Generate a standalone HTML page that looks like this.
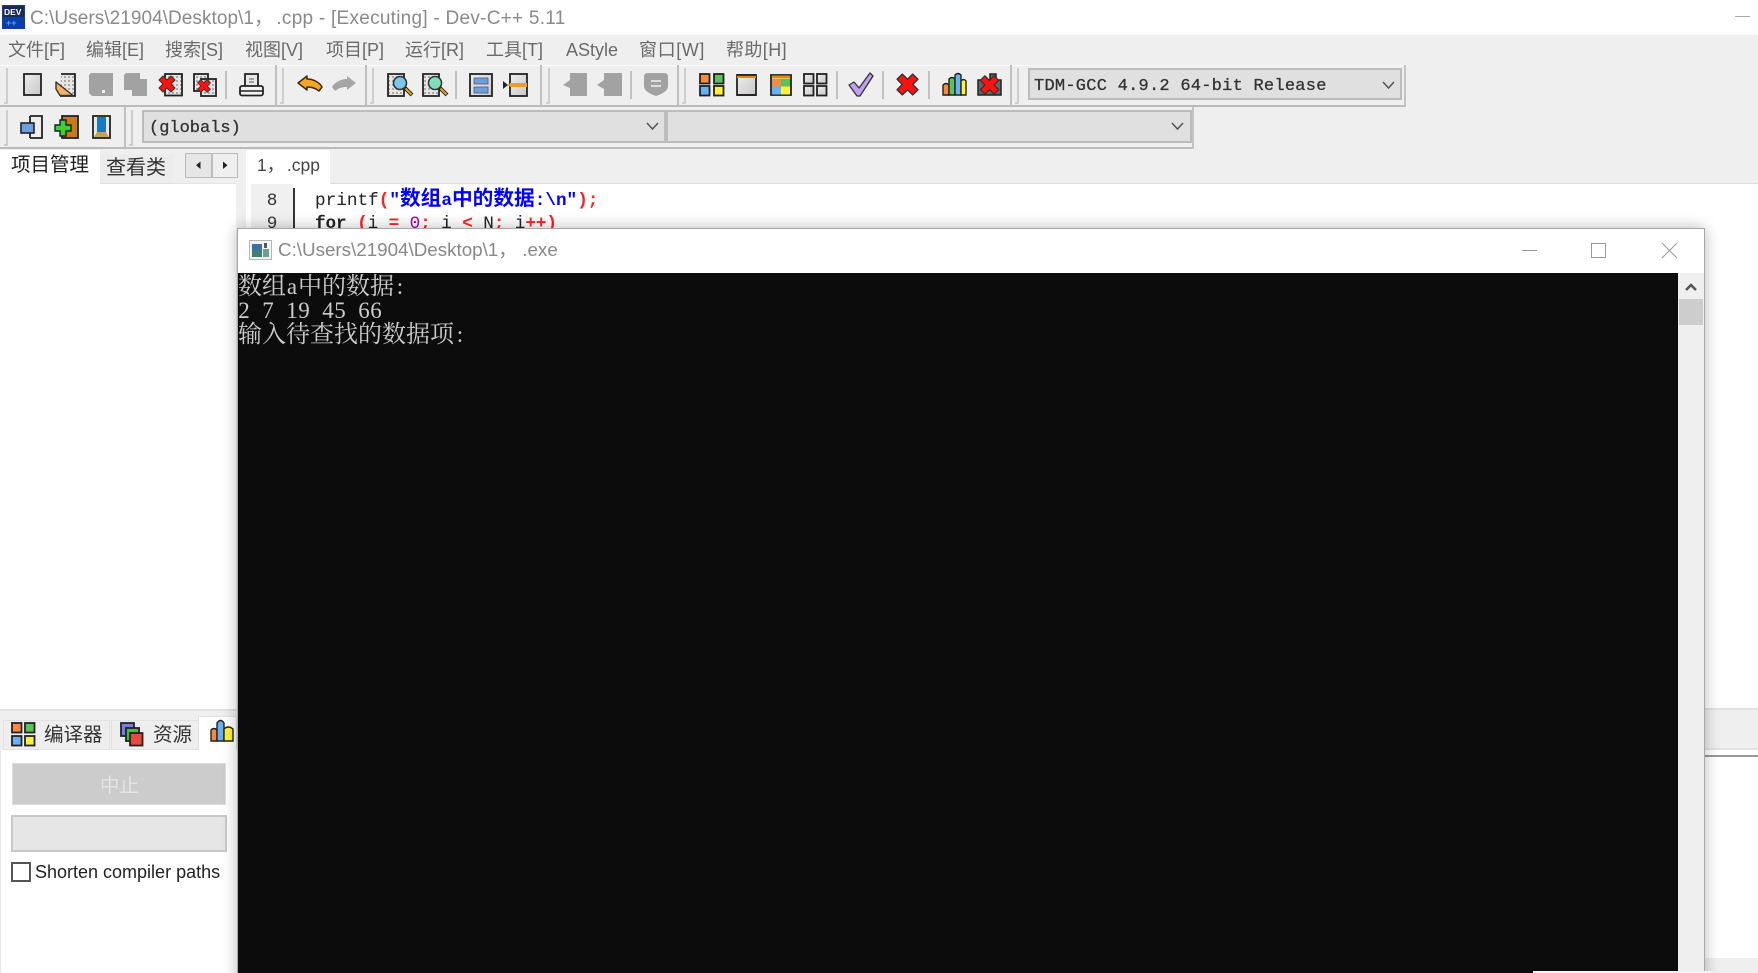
<!DOCTYPE html>
<html lang="zh"><head><meta charset="utf-8"><title>Dev-C++</title>
<style>
html,body{margin:0;padding:0;width:1758px;height:973px;overflow:hidden;background:#fff}
body{position:relative;font-family:"Liberation Sans","Noto Sans CJK SC",sans-serif}
.a{position:absolute}
.t{position:absolute;white-space:nowrap;line-height:1;filter:blur(.3px)}
.m{font-size:18px;color:#6a6a6a;top:41px}
.mono{font-family:"Liberation Mono",monospace;color:#333;font-size:17px;font-weight:normal;-webkit-text-stroke:.3px #333}
.code{font-family:"Liberation Mono","Noto Sans CJK SC",monospace;font-size:17.7px;color:#222}
.r{color:#f22;font-weight:bold}.b{color:#00f;font-weight:bold}
.b u{text-decoration:none;font-size:20.7px;line-height:1}
.con{font-family:"Liberation Serif","Noto Serif CJK SC",serif;color:#ccc;font-size:24px;left:238px;height:24px;line-height:24px}
.con i{display:inline-block;width:12px;font-style:normal;text-align:center;font-size:23px}
</style></head><body>
<!-- main backgrounds -->
<div class="a" style="left:0;top:35px;width:1758px;height:148px;background:#efefef"></div>
<div class="a" style="left:0;top:183px;width:236px;height:526px;background:#fff"></div>
<div class="a" style="left:236px;top:183px;width:10px;height:790px;background:#efefef"></div>
<div class="a" style="left:0;top:183px;width:236px;height:1px;background:#e4e4e4"></div>
<div class="a" style="left:0;top:709px;width:237px;height:41px;background:#efefef;border-top:2px solid #e2e2e2;box-sizing:border-box"></div>
<div class="a" style="left:0;top:750px;width:237px;height:223px;background:#fff;border-left:1px solid #e6e6e6;box-sizing:border-box"></div>
<div class="a" style="left:246px;top:183px;width:1512px;height:1px;background:#ddd"></div>
<div class="a" style="left:251px;top:184px;width:42px;height:50px;background:#f0f0f0"></div>
<div class="a" style="left:293px;top:188px;width:2px;height:46px;background:#333"></div>
<!-- right-hand panels -->
<div class="a" style="left:1704px;top:708px;width:54px;height:42px;background:#efefef;border-top:2px solid #e2e2e2;border-bottom:2px solid #e2e2e2;box-sizing:border-box"></div>
<div class="a" style="left:1704px;top:755px;width:54px;height:2px;background:#999"></div>
<div class="a" style="left:1704px;top:958px;width:54px;height:15px;background:#efefef"></div>
<!-- toolbar frames -->
<div class="a" style="left:0;top:65px;width:1405px;height:1px;background:#fafafa"></div>
<div class="a" style="left:0;top:105px;width:1405px;height:2px;background:#bbb"></div>
<div class="a" style="left:0;top:147px;width:1193px;height:2px;background:#bbb"></div>
<div class="a" style="left:1404px;top:65px;width:2px;height:42px;background:#c4c4c4"></div>
<div class="a" style="left:1192px;top:107px;width:2px;height:42px;background:#c4c4c4"></div>
<!-- combos -->
<div class="a" style="left:1028px;top:68px;width:374px;height:32px;background:#e0e0e0;border:2px solid #bcbcbc;box-sizing:border-box"></div>
<div class="a" style="left:142px;top:110px;width:524px;height:33px;background:#e0e0e0;border:2px solid #bcbcbc;box-sizing:border-box"></div>
<div class="a" style="left:666px;top:110px;width:526px;height:33px;background:#e0e0e0;border:2px solid #bcbcbc;box-sizing:border-box"></div>
<!-- tabs -->
<div class="a" style="left:0;top:150px;width:100px;height:34px;background:#fff"></div>
<div class="a" style="left:100px;top:154px;width:74px;height:30px;background:#ececec;border-bottom:1px solid #e0e0e0;box-sizing:border-box"></div>
<div class="a" style="left:246px;top:150px;width:84px;height:34px;background:#fff"></div>
<div class="a" style="left:185px;top:153px;width:27px;height:25px;background:#e6e6e6;border:1px solid #bbb;box-sizing:border-box"></div>
<div class="a" style="left:212px;top:153px;width:26px;height:25px;background:#efefef;border:1px solid #bbb;box-sizing:border-box"></div>

<!-- SVG icons -->
<svg class="a" style="left:0;top:0;filter:blur(.35px)" width="1758" height="973" viewBox="0 0 1758 973">
<defs>
<pattern id="dots" width="4" height="4" patternUnits="userSpaceOnUse"><rect width="4" height="4" fill="#e6e6e6"/><rect x="0" y="0" width="2" height="2" fill="#aaa"/></pattern>
<linearGradient id="gr" x1="0" y1="0" x2="1" y2="1"><stop offset="0" stop-color="#eee"/><stop offset="1" stop-color="#c8c8c8"/></linearGradient>
<g id="redx"><path d="M-8 -4 L-4 -8 L0 -4 L4 -8 L8 -4 L4 0 L8 4 L4 8 L0 4 L-4 8 L-8 4 L-4 0Z" fill="#f11" stroke="#333" stroke-width="1.100" stroke-linejoin="round"/></g>
<g id="glass"><circle cx="0" cy="0" r="6.5" fill="#7cc8e8" stroke="#333" stroke-width="1.6"/><path d="M5 5 L12 12" stroke="#222" stroke-width="4"/><path d="M5.500 5.500 L11.500 11.500" stroke="#e8a020" stroke-width="2"/></g>
</defs>
<!-- app icon -->
<rect x="2" y="5" width="23" height="24" fill="#0c3ea8"/><rect x="3" y="6" width="21" height="11" fill="#1a2a58"/>
<text x="4" y="15" font-family="Liberation Sans" font-size="8.500" font-weight="bold" fill="#fff">DEV</text>
<text x="6" y="26" font-family="Liberation Sans" font-size="9" font-weight="bold" fill="#4da0ff">++</text>
<!-- grips and separators, row 1 -->
<g stroke="#c4c4c4" stroke-width="1.500" fill="none">
<path d="M7 68V103H4M283 68V103H280M373 68V103H370M549 68V103H546M685 68V103H682M1018 68V103H1015M7 110V145H4M132 110V145H129"/>
<path d="M276 65V106M366 65V106M541 65V106M678 65V106M1011 65V106M125 107V148" stroke="#c0c0c0" stroke-width="2"/>
<path d="M226 71V99M456 71V99M631 71V99M837 71V99M883 71V99M929 71V99" stroke="#b4b4b4"/>
</g>
<!-- new -->
<rect x="24" y="74" width="17" height="21" fill="url(#gr)" stroke="#222" stroke-width="1.800"/>
<!-- open -->
<path d="M61 74H75V96H60" fill="url(#dots)" stroke="#222" stroke-width="1.800"/>
<path d="M56 82L73 95.500H60L56 89Z" fill="#f5b463" stroke="#333" stroke-width="1.400" stroke-linejoin="round"/>
<!-- save, save all -->
<path d="M91 73H113V96H92L89 93V75Z" fill="#a2a2a2"/><rect x="102" y="90" width="3" height="3" fill="#eee"/>
<path d="M126 73H140V79H147V96H132V90H124V75Z" fill="#a2a2a2"/>
<!-- close -->
<rect x="165" y="74" width="17" height="21.500" fill="url(#dots)" stroke="#222" stroke-width="1.800"/>
<use href="#redx" x="167" y="84"/>
<!-- close all -->
<rect x="194" y="74" width="14" height="17" fill="url(#dots)" stroke="#222" stroke-width="1.800"/>
<rect x="201" y="79" width="15" height="17" fill="url(#dots)" stroke="#222" stroke-width="1.800"/>
<use href="#redx" transform="translate(204 86) scale(.8)"/>
<!-- print -->
<path d="M245 86V74H258V86" fill="#e8e8e8" stroke="#222" stroke-width="1.800"/><path d="M249 79h5M249 82h5" stroke="#888" stroke-width="1.500"/>
<rect x="240" y="86" width="23" height="9.500" rx="2" fill="#f2f2f2" stroke="#222" stroke-width="1.800"/><path d="M240 91H263" stroke="#222" stroke-width="1.500"/>
<!-- undo -->
<path d="M298 83L307 76V79C314 79 320 83 322 87L319 91C315 88 312 87 307 87V90Z" fill="#f5a623" stroke="#3a2c10" stroke-width="1.500" stroke-linejoin="round"/>
<!-- redo -->
<path d="M356 83L347 76V79C340 79 334 83 332 87L335 91C339 88 342 87 347 87V90Z" fill="#a6a6a6"/>
<!-- find -->
<path d="M388 74H404V96H388Z" fill="url(#dots)" stroke="#222" stroke-width="1.800"/>
<use href="#glass" x="400" y="83"/>
<path d="M423 74H439V96H423Z" fill="url(#dots)" stroke="#222" stroke-width="1.800"/>
<use href="#glass" x="435" y="83"/><circle cx="435" cy="83" r="5.700" fill="#7ee0b8"/>
<!-- goto -->
<rect x="470" y="74" width="22" height="22" fill="url(#gr)" stroke="#222" stroke-width="1.800"/>
<rect x="474" y="78" width="14" height="6" fill="#6b9fe0" stroke="#556" stroke-width=".8"/><rect x="474" y="87" width="14" height="6" fill="#6b9fe0" stroke="#556" stroke-width=".8"/>
<!-- toggle -->
<rect x="510" y="74" width="17" height="22" fill="url(#gr)" stroke="#222" stroke-width="1.800"/>
<rect x="510" y="83" width="17" height="4" fill="#e8a020"/><path d="M503 81V89L508 85Z" fill="#222"/><rect x="508" y="84" width="2" height="2" fill="#e8a020"/>
<!-- disabled indent etc -->
<path d="M570 73H587V96H570V88L563 85L570 80Z" fill="#a2a2a2"/>
<path d="M604 73H622V96H604V89L597 85L604 80Z" fill="#a2a2a2"/>
<path d="M648 73H664Q668 73 668 77V86Q668 92 656 96Q644 92 644 86V77Q644 73 648 73Z" fill="#a2a2a2"/><path d="M651 81h10M651 86h10" stroke="#ddd" stroke-width="2"/>
<!-- compile grid -->
<g stroke="#222" stroke-width="1.800">
<rect x="700" y="74" width="9.500" height="9.500" fill="#f58a40"/><rect x="714" y="74" width="9.500" height="9.500" fill="#5ec15a"/>
<rect x="700" y="86" width="9.500" height="9.500" fill="#69b1f5"/><rect x="714" y="86" width="9.500" height="9.500" fill="#fff23a"/>
<!-- run -->
<rect x="737" y="75" width="19" height="20" fill="url(#gr)"/>
<!-- compile+run -->
<rect x="771" y="75" width="20" height="20" fill="#eee"/>
</g>
<rect x="737" y="75" width="19" height="3" fill="#e08a10"/><path d="M737 75H756M737 95H756" stroke="#222" stroke-width="1.800"/>
<rect x="772" y="79" width="9" height="7.500" fill="#f58a40"/><rect x="781" y="79" width="9" height="7.500" fill="#5ec15a"/>
<rect x="772" y="86.500" width="9" height="8" fill="#69b1f5"/><rect x="781" y="86.500" width="9" height="8" fill="#fff23a"/>
<rect x="772" y="75.500" width="18" height="3" fill="#e08a10"/>
<!-- rebuild -->
<g stroke="#222" stroke-width="1.800" fill="url(#gr)">
<rect x="804" y="74" width="9.500" height="9.500"/><rect x="817" y="74" width="9.500" height="9.500"/>
<rect x="804" y="86" width="9.500" height="9.500"/><rect x="817" y="86" width="9.500" height="9.500"/>
</g>
<!-- check -->
<path d="M849 85L854 82L859 88L870 73L873 76L860 96H857Z" fill="#c0a0f0" stroke="#333" stroke-width="1.300" stroke-linejoin="round"/>
<!-- red x -->
<use href="#redx" transform="translate(907.500 84.500) scale(1.300)"/>
<!-- chart -->
<g stroke="#222" stroke-width="1.400">
<path d="M943 95V85Q946 82 949 85V95Z" fill="#f58a40"/><path d="M949 95V79Q952 76 955 79V95Z" fill="#5ec15a"/><path d="M955 95V75Q958 72 961 75V95Z" fill="#69b1f5"/><path d="M961 95V81Q963.500 78 966 81V95Z" fill="#fff23a"/>
</g>
<!-- stop -->
<path d="M978 80H990V74H996V80H1001V95H978Z" fill="#666" stroke="#222" stroke-width="1.500"/>
<use href="#redx" transform="translate(989.500 85) scale(1.150)"/>
<!-- row 2 -->
<path d="M30 116H42V138H30" fill="#eee" stroke="#222" stroke-width="1.800"/><path d="M30 116V138" stroke="#222" stroke-width="1.800"/>
<rect x="21" y="123" width="13" height="10" fill="#6b9fe0" stroke="#222" stroke-width="1.600"/>
<rect x="62" y="116" width="16" height="22" fill="#c97a10" stroke="#222" stroke-width="1.800"/>
<path d="M60 120H66V125H71V131H66V136H60V131H55V125H60Z" fill="#3fd030" stroke="#123" stroke-width="1.400"/>
<rect x="93" y="116" width="17" height="22" fill="#e8e8e8" stroke="#222" stroke-width="1.800"/>
<rect x="97" y="117" width="9" height="15" fill="#1a78c8"/><path d="M97 132L94 137H109L106 132Z" fill="#c4a060"/>
<!-- chevrons -->
<g fill="none" stroke="#555" stroke-width="1.500">
<path d="M647 123L652.500 129L658 123M1172 123L1177.500 129L1183 123M1383 82L1388.500 88L1394 82"/>
</g>
<!-- main minimize -->
<rect x="1735" y="16" width="15" height="1" fill="#aaa"/>
<!-- tab arrows -->
<path d="M200.500 161.500V169L196 165.200Z" fill="#222"/><path d="M223 161.500V169L227.500 165.200Z" fill="#222"/>
</svg>

<!-- title and menus -->
<div class="t" style="left:30px;top:9px;font-size:19px;color:#8a8a8a;letter-spacing:.05px">C:\Users\21904\Desktop\1<span style="letter-spacing:-2.2px">，</span><span style="letter-spacing:.26px"> .cpp - [Executing] - Dev-C++ 5.11</span></div>
<div class="t m" style="left:8px">文件[F]</div>
<div class="t m" style="left:86px">编辑[E]</div>
<div class="t m" style="left:165px">搜索[S]</div>
<div class="t m" style="left:245px">视图[V]</div>
<div class="t m" style="left:326px">项目[P]</div>
<div class="t m" style="left:405px">运行[R]</div>
<div class="t m" style="left:486px">工具[T]</div>
<div class="t m" style="left:566px">AStyle</div>
<div class="t m" style="left:639px;letter-spacing:.6px">窗口[W]</div>
<div class="t m" style="left:726px;letter-spacing:.4px">帮助[H]</div>
<div class="t mono" style="left:1034px;top:78px;letter-spacing:.25px">TDM-GCC 4.9.2 64-bit Release</div>
<div class="t mono" style="left:149px;top:120px">(globals)</div>

<!-- tab labels -->
<div class="t" style="left:11px;top:156px;font-size:19.500px;color:#222">项目管理</div>
<div class="t" style="left:106px;top:158px;font-size:20px;color:#333">查看类</div>
<div class="t" style="left:257px;top:157px;font-size:17.500px;color:#444">1<span style="letter-spacing:-2.200px">，</span> .cpp</div>

<!-- code -->
<div class="t code" style="left:262px;top:193px;width:20px;text-align:center;color:#333">8</div>
<div class="t code" style="left:262px;top:216px;width:20px;text-align:center;color:#333">9</div>
<div class="t code" style="left:315px;top:191px">printf<span class="r">(</span><span class="b">"<u>数组</u>a<u>中的数据</u>:\n"</span><span class="r">);</span></div>
<div class="t code" style="left:315px;top:216px;letter-spacing:-.1px"><b>for</b> <span class="r">(</span>i <span class="r">=</span> <span style="color:#a0a">0</span><span class="r">;</span> i <span class="r">&lt;</span> N<span class="r">;</span> i<span class="r">++)</span></div>

<!-- bottom-left -->
<div class="a" style="left:3px;top:720px;width:107px;height:30px;background:#eee;border:1px solid #e2e2e2;box-sizing:border-box"></div>
<div class="a" style="left:111px;top:720px;width:88px;height:30px;background:#eee;border:1px solid #e2e2e2;box-sizing:border-box"></div>
<div class="a" style="left:198px;top:716px;width:39px;height:34px;background:#fff;border:1px solid #e2e2e2;border-bottom:0;box-sizing:border-box"></div>
<svg class="a" style="left:0;top:710px;filter:blur(.3px)" width="237" height="45" viewBox="0 710 237 45">
<g stroke="#222" stroke-width="1.800">
<rect x="12" y="723" width="9.500" height="9.500" fill="#f58a40"/><rect x="25" y="723" width="9.500" height="9.500" fill="#5ec15a"/>
<rect x="12" y="736" width="9.500" height="9.500" fill="#69b1f5"/><rect x="25" y="736" width="9.500" height="9.500" fill="#fff23a"/>
<rect x="121" y="723" width="13" height="13" fill="#7a7ae0"/><rect x="126" y="728" width="13" height="13" fill="#3fc040"/><rect x="130" y="733" width="12.500" height="12.500" fill="#e84a40"/>
</g>
<g stroke="#222" stroke-width="1.400">
<path d="M211 741V730Q214 727 217 730V741Z" fill="#f58a40"/><path d="M217 741V723Q220.500 718 224 723V741Z" fill="#69b1f5"/><path d="M224 741V729Q228 725 233 729V741Z" fill="#fff23a"/>
</g>
</svg>
<div class="t" style="left:44px;top:726px;font-size:19.500px;color:#333">编译器</div>
<div class="t" style="left:153px;top:726px;font-size:19.500px;color:#333">资源</div>
<div class="a" style="left:12px;top:763px;width:214px;height:42px;background:#ccc;border:1px solid #ddd;box-sizing:border-box"></div>
<div class="t" style="left:100px;top:777px;font-size:19.500px;color:#e4e4e4">中止</div>
<div class="a" style="left:11px;top:815px;width:216px;height:37px;background:#e6e6e6;border:2px solid #c8c8c8;box-sizing:border-box"></div>
<div class="a" style="left:11px;top:862px;width:20px;height:20px;background:#fff;border:2px solid #555;box-sizing:border-box"></div>
<div class="t" style="left:35px;top:863px;font-size:18px;color:#222">Shorten compiler paths</div>

<!-- console window -->
<div class="a" style="left:237px;top:228px;width:1468px;height:760px;background:#fff;border:1px solid #a8a8a8;box-sizing:border-box;box-shadow:0 0 14px rgba(0,0,0,.28)"></div>
<div class="a" style="left:238px;top:273px;width:1440px;height:700px;background:#0c0c0c"></div>
<div class="a" style="left:1678px;top:273px;width:26px;height:700px;background:#efefef"></div>
<div class="a" style="left:1679px;top:299px;width:24px;height:26px;background:#cdcdcd"></div>
<svg class="a" style="left:1520px;top:238px" width="190" height="60" viewBox="1520 238 190 60">
<rect x="1522" y="250" width="15" height="1" fill="#999"/>
<rect x="1591.500" y="243.500" width="14" height="14" fill="none" stroke="#999"/>
<path d="M1662 243L1677 258M1677 243L1662 258" stroke="#999" stroke-width="1" fill="none"/>
<path d="M1686 290L1691 285L1696 290" fill="none" stroke="#555" stroke-width="2.500"/>
</svg>
<svg class="a" style="left:249px;top:240px" width="23" height="20" viewBox="0 0 23 20">
<rect x=".5" y=".5" width="22" height="19" fill="#f4f4f4" stroke="#b5b5b5"/>
<rect x="3" y="4" width="10" height="13" fill="#3f7f70"/><rect x="3" y="4" width="10" height="6" fill="#3f6fa8"/><rect x="14" y="9" width="6" height="8" fill="#6aa090"/><rect x="15" y="3" width="3" height="5" fill="#557"/>
</svg>
<div class="t" style="left:278px;top:241px;font-size:18.800px;color:#888">C:\Users\21904\Desktop\1， .exe</div>
<div class="t con" style="top:275px">数组<i>a</i>中的数据<i>:</i></div>
<div class="t con" style="top:299px"><i>2</i><i> </i><i>7</i><i> </i><i>1</i><i>9</i><i> </i><i>4</i><i>5</i><i> </i><i>6</i><i>6</i></div>
<div class="t con" style="top:323px">输入待查找的数据项<i>:</i></div>
<div class="a" style="left:1533px;top:971px;width:180px;height:2px;background:#f4f4f4"></div>
</body></html>
